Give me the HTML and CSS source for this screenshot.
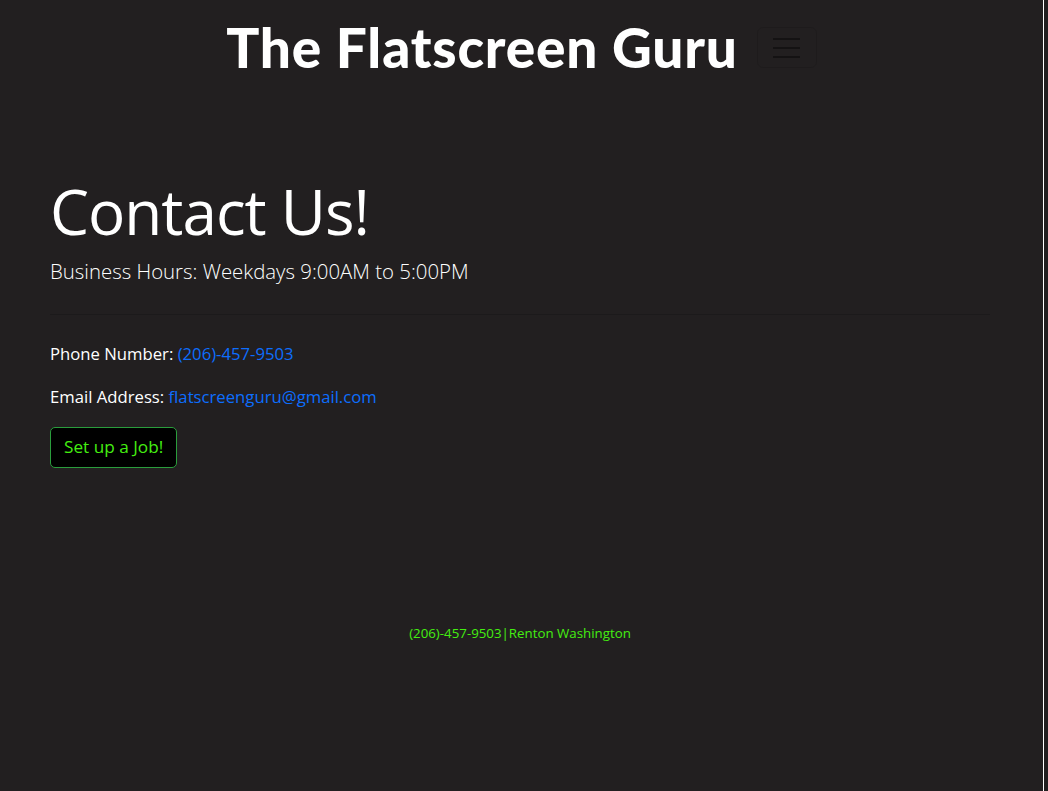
FILE: index.html
```html
<!DOCTYPE html>
<html lang="en">
<head>
<meta charset="utf-8">
<title>Contact Us - The Flatscreen Guru</title>
<link rel="stylesheet" href="styles.css">
</head>
<body>
<div class="page">
  <header class="navbar">
    <a class="brand" href="#">The Flatscreen Guru</a>
    <button class="toggler" type="button" aria-label="Toggle navigation">
      <span class="bar"></span><span class="bar"></span><span class="bar"></span>
    </button>
  </header>
  <main class="container">
    <h1 class="display">Contact Us!</h1>
    <p class="lead">Business Hours: Weekdays 9:00AM to 5:00PM</p>
    <hr class="rule">
    <p class="info">Phone Number: <a class="link" href="#">(206)-457-9503</a></p>
    <p class="info">Email Address: <a class="link" href="#">flatscreenguru@gmail.com</a></p>
    <a class="btn" href="#">Set up a Job!</a>
  </main>
  <footer class="footer">(206)-457-9503|Renton Washington</footer>
</div>
</body>
</html>
```

FILE: styles.css
```css
* { box-sizing: border-box; }
html, body { margin: 0; padding: 0; background: #221f20; }
body {
  font-family: "Open Sans", "Noto Sans", sans-serif;
  color: #fff;
}
.page {
  width: 1044px;
  min-height: 791px;
  border-right: 1px solid #fff;
  background: #221f20;
  display: flex;
  flex-direction: column;
}
.navbar {
  display: flex;
  justify-content: center;
  align-items: flex-start;
  gap: 19px;
  padding: 17px 0 0 0;
  height: 86px;
}
.brand {
  font-family: "Lato", sans-serif;
  font-weight: 900;
  font-size: 55px;
  line-height: 60px;
  letter-spacing: 0.8px;
  color: #fff;
  text-decoration: none;
}
.toggler {
  width: 60px;
  height: 41px;
  margin-top: 10px;
  background: transparent;
  border: 1px solid rgba(0,0,0,0.1);
  border-radius: 6px;
  display: flex;
  flex-direction: column;
  align-items: center;
  justify-content: center;
  gap: 7px;
  padding: 0;
}
.toggler .bar {
  display: block;
  width: 27px;
  height: 2px;
  background: #141213;
}
.container {
  padding: 0 0 0 50px;
  width: 990px;
}
.display {
  margin: 88px 0 0 0;
  font-size: 62px;
  font-weight: 500;
  line-height: 1.2;
  letter-spacing: -1px;
}
.lead {
  margin: 8px 0 0 0;
  font-size: 20.4px;
  font-weight: 300;
  line-height: 1.5;
}
.rule {
  margin: 27px 0 26px 0;
  border: 0;
  border-top: 1px solid #1c1a1b;
}
.info {
  margin: 0 0 18px 0;
  font-size: 16.7px;
  line-height: 25px;
}
.link { color: #0d6efd; text-decoration: none; }
.btn {
  display: inline-block;
  margin-top: 0;
  padding: 7px 13px 8px;
  font-size: 17.2px;
  line-height: 24px;
  color: #44ee11;
  background: #000;
  border: 1px solid #2a9d3c;
  border-radius: 5px;
  text-decoration: none;
}
.footer {
  margin-top: 156px;
  text-align: center;
  font-size: 13.3px;
  color: #44ee11;
  width: 1040px;
}
```
